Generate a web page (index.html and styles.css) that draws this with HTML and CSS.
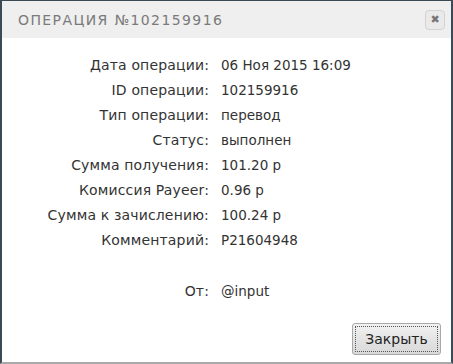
FILE: index.html
```html
<!DOCTYPE html>
<html lang="ru">
<head>
  <meta charset="UTF-8">
  <link rel="stylesheet" href="styles.css">
  <title>Операция</title>
</head>
<body>
  <div class="dialog">
    <div class="head">
      <span class="title">ОПЕРАЦИЯ №102159916</span>
      <span class="x">&#x2716;</span>
    </div>
    <div class="body">
      <div class="info">
        <div class="k">Дата операции:</div><div class="v">06 Ноя 2015 16:09</div>
        <div class="k">ID операции:</div><div class="v">102159916</div>
        <div class="k">Тип операции:</div><div class="v">перевод</div>
        <div class="k">Статус:</div><div class="v">выполнен</div>
        <div class="k">Сумма получения:</div><div class="v">101.20 р</div>
        <div class="k">Комиссия Payeer:</div><div class="v">0.96 р</div>
        <div class="k">Сумма к зачислению:</div><div class="v">100.24 р</div>
        <div class="k">Комментарий:</div><div class="v">P21604948</div>
        <div class="k gap"></div><div class="v gap"></div>
        <div class="k">От:</div><div class="v">@input</div>
      </div>
      <div class="foot">
        <button class="btn">Закрыть</button>
      </div>
    </div>
  </div>
</body>
</html>
```

FILE: styles.css
```css
* {
  margin: 0;
  padding: 0;
  box-sizing: border-box;
}
body {
  width: 453px;
  height: 364px;
  overflow: hidden;
  background: #fff;
}
.dialog {
  height: 364px;
  border: 2px solid #3b4a54;
  border-bottom: 2px solid #a9a9a9;
  border-top-width: 1px;
  display: flex;
  flex-direction: column;
}
.head {
  height: 37px;
  background: #efefef;
  display: flex;
  align-items: center;
  justify-content: space-between;
  padding: 0 6px 0 16px;
}
.title {
  font-family: "DejaVu Sans", sans-serif;
  font-size: 14px;
  letter-spacing: 1.4px;
  color: #7a7a7a;
  padding-top: 1px;
}
.x {
  width: 20px;
  height: 20px;
  border: 1px solid #d3d3d3;
  border-radius: 4px;
  background: #eaeaea;
  color: #777;
  font-size: 11px;
  display: flex;
  align-items: center;
  justify-content: center;
  font-family: "DejaVu Sans", sans-serif;
}
.body {
  flex: 1;
  display: flex;
  flex-direction: column;
}
.info {
  display: grid;
  grid-template-columns: 207px 1fr;
  column-gap: 12px;
  padding-top: 18px;
  font-family: "DejaVu Sans", sans-serif;
  font-size: 13.5px;
  color: #333;
}
.k, .v {
  height: 25px;
  line-height: 18px;
}
.k {
  text-align: right;
  font-size: 14px;
  letter-spacing: 0.15px;
}
.gap {
  height: 26px;
}
.foot {
  flex: 1;
  display: flex;
  justify-content: flex-end;
  align-items: flex-end;
  padding: 0 10px 7px 0;
}
.btn {
  width: 89px;
  height: 32px;
  font-family: "DejaVu Sans", sans-serif;
  font-size: 14px;
  color: #222;
  border: 1px solid #a8a8a8;
  border-radius: 3px;
  background: linear-gradient(#f2f2f2, #e4e4e4 50%, #d9d9d9);
  outline: 1px dotted #555;
  outline-offset: -4px;
}
```
